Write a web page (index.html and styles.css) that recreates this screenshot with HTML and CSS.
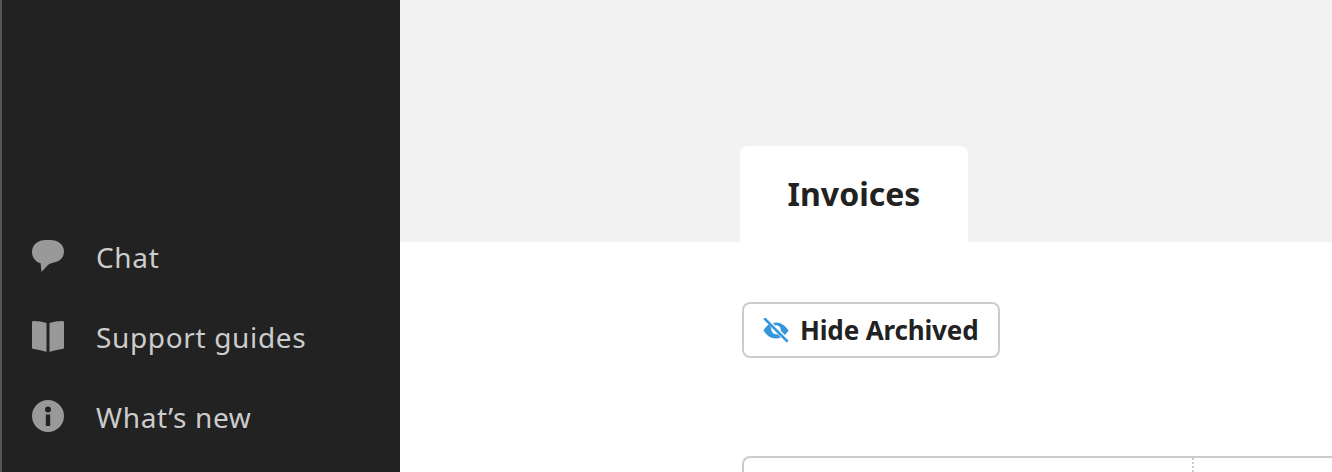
FILE: index.html
```html
<!DOCTYPE html>
<html lang="en">
<head>
  <meta charset="UTF-8" />
  <title>Invoices</title>
  <link rel="stylesheet" href="styles.css">
</head>
<body>
  <nav class="sidebar">
    <a class="nav-item" href="#">
      <svg class="nav-icon" viewBox="0 0 32 32"><path d="M14 0h4c8 0 14 4.600 14 11.500 0 6-4.500 10-10 11-2.500.4-4.500 1.200-6.500 3L9.500 32l-.9-8.800C3.500 21.800 0 17.500 0 12 0 4.800 6 0 14 0z"/></svg>
      <span class="nav-label">Chat</span>
    </a>
    <a class="nav-item" href="#">
      <svg class="nav-icon" viewBox="0 0 32 32"><path d="M1.500 1C6 1.200 10.500 1.800 14.500 3v29C10.500 30.500 6 29.500 1.500 29 .5 28.900 0 28.300 0 27.400V2.500C0 1.600.6 1 1.500 1zM30.500 1c.9 0 1.500.6 1.500 1.500v24.900c0 .9-.5 1.500-1.500 1.600-4.500.5-9 1.500-13 3V3c4-1.200 8.500-1.800 13-2z"/></svg>
      <span class="nav-label">Support guides</span>
    </a>
    <a class="nav-item" href="#">
      <svg class="nav-icon" viewBox="0 0 32 32"><path fill-rule="evenodd" d="M16 0a16 16 0 1 1 0 32 16 16 0 0 1 0-32zm0 6.500a3 3 0 1 0 0 6 3 3 0 0 0 0-6zM13.800 14.500V26h4.400V14.500z"/></svg>
      <span class="nav-label">What’s new</span>
    </a>
  </nav>

  <main class="main">
    <header class="tabs-band">
      <div class="tab">Invoices</div>
    </header>
    <section class="content">
      <button class="archive-btn">
        <svg class="eye-icon" viewBox="0 0 26 24">
          <path d="M6.500 6C4 7.500 2 9.800.5 12.500 3.500 17.500 8 20.500 13 20.500c1.700 0 3.300-.3 4.800-1l-3-3.200c-3.500.8-6.800-2-6.500-5.800z"/>
          <path d="M10 5c1-.3 2-.5 3-.5 5 0 9.500 3 12.500 8-1 1.700-2.300 3.200-3.700 4.400l-4-4.200c.4-3.500-2.700-6-5.700-5.200z"/>
          <path class="eye-slash" d="M2 1l22 22"/>
        </svg>
        Hide Archived
      </button>
      <div class="table-box">
        <div class="table-cell-first"></div>
        <div class="table-cell"></div>
      </div>
    </section>
  </main>
</body>
</html>
```

FILE: styles.css
```css
html, body {
  height: 100%;
}
body {
  margin: 0;
  display: flex;
  overflow: hidden;
  font-family: "Noto Sans", sans-serif;
  color: #222;
  background-color: #fff;
}
.sidebar {
  box-sizing: border-box;
  width: 400px;
  flex-shrink: 0;
  display: flex;
  flex-direction: column;
  justify-content: flex-end;
  padding: 0 0 16px 30px;
  background-color: #222;
  border-left: 2px solid #555;
}
.nav-item {
  height: 80px;
  display: flex;
  align-items: center;
  gap: 32px;
  font-size: 28px;
  letter-spacing: 0.65px;
  color: #ccc;
  text-decoration: none;
}
.nav-label {
  padding-top: 2px;
}
.nav-icon {
  width: 32px;
  height: 32px;
  fill: #999;
  flex-shrink: 0;
}
.main {
  flex: 1;
  min-width: 0;
}
.tabs-band {
  height: 242px;
  display: flex;
  align-items: flex-end;
  padding-left: 340px;
  box-sizing: border-box;
  background-color: #f2f2f2;
}
.tab {
  width: 228px;
  height: 96px;
  box-sizing: border-box;
  padding-top: 26px;
  text-align: center;
  font-size: 32px;
  line-height: 44px;
  font-weight: 700;
  background-color: #fff;
  border-radius: 8px 8px 0 0;
}
.content {
  padding: 60px 0 0 342px;
}
.archive-btn {
  width: 258px;
  height: 56px;
  box-sizing: border-box;
  display: flex;
  align-items: center;
  gap: 11px;
  padding: 0 0 0 19px;
  font-family: inherit;
  font-size: 26px;
  letter-spacing: -0.15px;
  font-weight: 700;
  color: #222;
  background-color: #fff;
  border: 2px solid #ccc;
  border-radius: 8px;
}
.eye-icon {
  width: 26px;
  height: 24px;
  flex-shrink: 0;
  fill: #3498db;
}
.eye-slash {
  fill: none;
  stroke: #3498db;
  stroke-width: 2.500;
  stroke-linecap: round;
}
.table-box {
  margin-top: 98px;
  height: 16px;
  display: flex;
  box-sizing: border-box;
  border-top: 2px solid #ccc;
  border-left: 2px solid #ccc;
  border-radius: 8px 0 0 0;
}
.table-cell-first {
  width: 448px;
  border-right: 2px dotted #ccc;
}
.table-cell {
  flex: 1;
}
```
